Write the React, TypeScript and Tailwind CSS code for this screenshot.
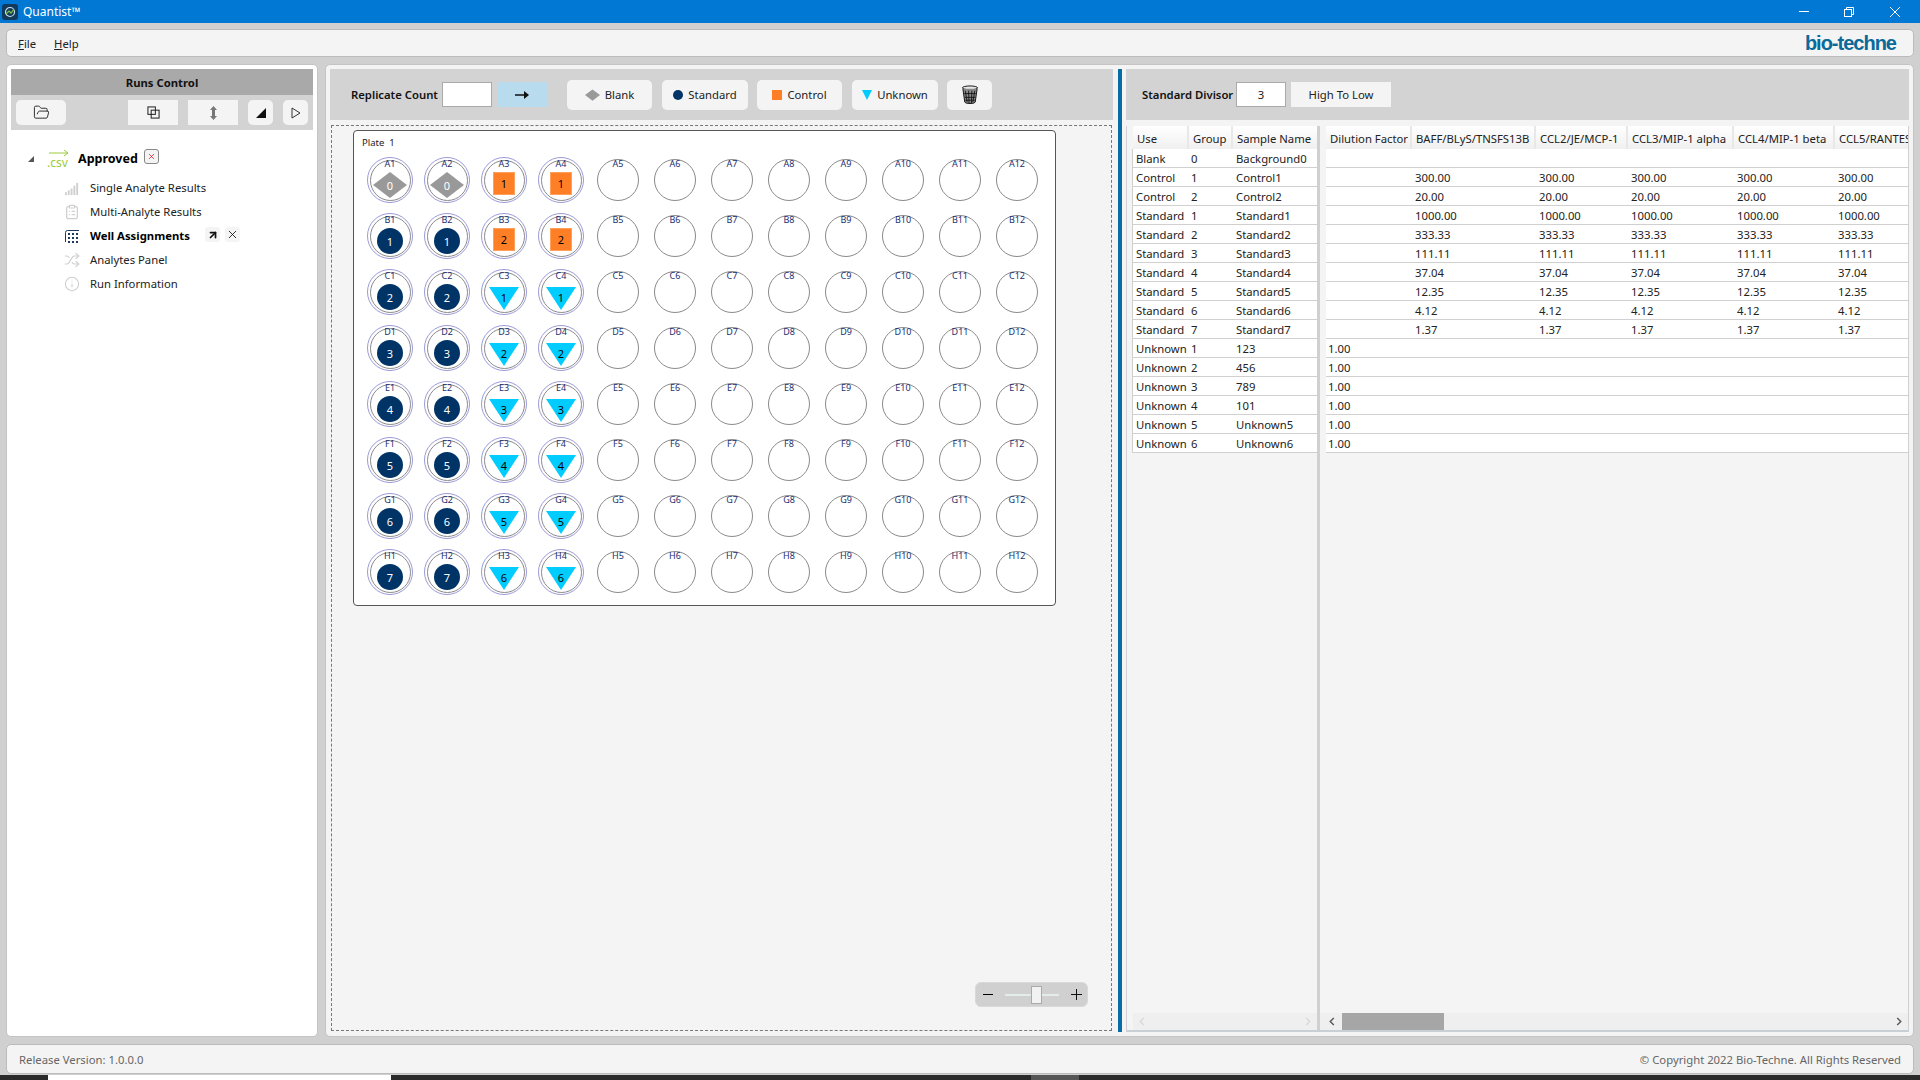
import { ArrowUpRight, ClipboardList, FolderOpen, Info, Shuffle, X } from 'lucide-react';

const ROW_LETTERS = ['A', 'B', 'C', 'D', 'E', 'F', 'G', 'H'];
const COLS = [1, 2, 3, 4, 5, 6, 7, 8, 9, 10, 11, 12];

const ROWS = [
  { use: 'Blank', group: '0', name: 'Background0', vals: '', dil: '' },
  { use: 'Control', group: '1', name: 'Control1', vals: '300.00', dil: '' },
  { use: 'Control', group: '2', name: 'Control2', vals: '20.00', dil: '' },
  { use: 'Standard', group: '1', name: 'Standard1', vals: '1000.00', dil: '' },
  { use: 'Standard', group: '2', name: 'Standard2', vals: '333.33', dil: '' },
  { use: 'Standard', group: '3', name: 'Standard3', vals: '111.11', dil: '' },
  { use: 'Standard', group: '4', name: 'Standard4', vals: '37.04', dil: '' },
  { use: 'Standard', group: '5', name: 'Standard5', vals: '12.35', dil: '' },
  { use: 'Standard', group: '6', name: 'Standard6', vals: '4.12', dil: '' },
  { use: 'Standard', group: '7', name: 'Standard7', vals: '1.37', dil: '' },
  { use: 'Unknown', group: '1', name: '123', vals: '', dil: '1.00' },
  { use: 'Unknown', group: '2', name: '456', vals: '', dil: '1.00' },
  { use: 'Unknown', group: '3', name: '789', vals: '', dil: '1.00' },
  { use: 'Unknown', group: '4', name: '101', vals: '', dil: '1.00' },
  { use: 'Unknown', group: '5', name: 'Unknown5', vals: '', dil: '1.00' },
  { use: 'Unknown', group: '6', name: 'Unknown6', vals: '', dil: '1.00' },
];

const Diamond = ({ className }: { className: string }) => (
  <svg viewBox="0 0 34 26" className={className}>
    <polygon points="17,0 34,13 17,26 0,13" fill="#999999" />
  </svg>
);

const Triangle = ({ className }: { className: string }) => (
  <svg viewBox="0 0 30 23" className={className}>
    <polygon points="0,0 30,0 15,23" fill="#00ccff" />
  </svg>
);

const Well = ({ row, col }: { row: number; col: number }) => {
  const label = `${ROW_LETTERS[row]}${col}`;
  if (col > 4) {
    return (
      <div className="relative flex h-[56px] w-[57px] items-center justify-center">
        <div className="relative h-[42px] w-[42px] rounded-full border border-[#8a8a8a]">
          <span className="absolute left-0 right-0 top-[-2px] text-center text-[9px] leading-[12px] text-[#1a2f70]">{label}</span>
        </div>
      </div>
    );
  }
  let shape = null;
  if (col <= 2 && row === 0) {
    shape = (
      <div className="absolute left-[5px] top-[14px] h-[26px] w-[34px]">
        <Diamond className="h-[26px] w-[34px]" />
        <span className="absolute inset-0 flex items-center justify-center text-[11px] text-white">0</span>
      </div>
    );
  } else if (col <= 2) {
    shape = (
      <div className="absolute left-[9px] top-[14px] flex h-[26px] w-[26px] items-center justify-center rounded-full bg-[#003366] text-[11px] text-white">
        {row}
      </div>
    );
  } else if (row < 2) {
    shape = (
      <div className="absolute left-[11px] top-[14px] flex h-[23px] w-[22px] items-center justify-center border border-[#ffa05c] bg-[#ff7f27] text-[11px] text-black">
        {row + 1}
      </div>
    );
  } else {
    shape = (
      <div className="absolute left-[7px] top-[17px] h-[23px] w-[30px]">
        <Triangle className="h-[23px] w-[30px]" />
        <span className="absolute left-0 right-0 top-[4px] text-center text-[11px] leading-[14px] text-black">{row - 1}</span>
      </div>
    );
  }
  return (
    <div className="relative flex h-[56px] w-[57px] items-center justify-center">
      <div className="relative h-[46px] w-[46px] rounded-full border border-[#9a9ad8]">
        <div className="absolute inset-[1.5px] rounded-full border border-[#8a8a8a]" />
        {shape}
        <span className="absolute left-0 right-0 top-0 text-center text-[9px] leading-[12px] text-[#1a2f70]">{label}</span>
      </div>
    </div>
  );
};

const ToolButton = ({ className, children }: { className: string; children: React.ReactNode }) => (
  <div className={`flex items-center justify-center bg-[#f4f4f4] ${className}`}>{children}</div>
);

const TreeItem = ({ icon, label, bold }: { icon: React.ReactNode; label: string; bold?: boolean }) => (
  <div className="flex h-[24px] items-center pl-[53px]">
    <div className="flex w-[16px] justify-center">{icon}</div>
    <span className={`ml-[10px] w-[115px] whitespace-nowrap ${bold ? 'font-bold text-black' : 'text-[#222]'}`}>{label}</span>
    {bold && (
      <>
        <div className="mb-[3px] flex h-[15px] w-[15px] items-center justify-center rounded-[3px] bg-[#f4f4f4]">
          <ArrowUpRight size={12} strokeWidth={3.5} color="#111" />
        </div>
        <div className="mb-[3px] ml-[5px] flex h-[15px] w-[15px] items-center justify-center rounded-[3px] bg-[#f4f4f4]">
          <X size={13} strokeWidth={1.6} color="#111" />
        </div>
      </>
    )}
  </div>
);

const RunsPanel = () => (
  <div className="w-[312px] shrink-0 rounded-[5px] border border-[#c4c4c4] bg-white p-[4px]">
    <div className="flex h-[26px] items-center justify-center bg-[#a9a9a9] pt-[1px] font-bold text-[#111]">Runs Control</div>
    <div className="flex h-[35px] items-center bg-[#d3d3d3] pl-[5px]">
      <ToolButton className="h-[25px] w-[50px] rounded-[5px]">
        <FolderOpen size={17} strokeWidth={1.3} color="#222" />
      </ToolButton>
      <ToolButton className="ml-[62px] h-[25px] w-[50px]">
        <svg viewBox="0 0 14 14" className="size-[13px]" fill="none" stroke="#222" strokeWidth="1.1">
          <rect x="1" y="1" width="8" height="8" />
          <rect x="4.5" y="4.5" width="8.5" height="8.5" />
        </svg>
      </ToolButton>
      <ToolButton className="ml-[10px] h-[25px] w-[50px]">
        <svg viewBox="0 0 7 14" className="h-[14px] w-[7px]" fill="#777777">
          <polygon points="3.5,0 7,4 5,4 5,10 7,10 3.5,14 0,10 2,10 2,4 0,4" />
        </svg>
      </ToolButton>
      <ToolButton className="ml-[10px] h-[25px] w-[25px] rounded-[5px]">
        <svg viewBox="0 0 10 10" className="size-[10px]"><polygon points="10,0 10,10 0,10" fill="#111" /></svg>
      </ToolButton>
      <ToolButton className="ml-[10px] h-[25px] w-[25px] rounded-[5px]">
        <svg viewBox="0 0 10 12" className="h-[12px] w-[10px]" fill="none" stroke="#333"><polygon points="1,1 9,6 1,11" /></svg>
      </ToolButton>
    </div>
    <div className="pt-[17px]">
      <div className="flex h-[24px] items-center pl-[17px]">
        <svg viewBox="0 0 6 6" className="size-[6px]"><polygon points="6,0 6,6 0,6" fill="#555" /></svg>
        <div className="relative ml-[13px] h-[24px] w-[22px]">
          <svg viewBox="0 0 20 8" className="absolute left-[2px] top-[2px] h-[8px] w-[20px]" fill="none" stroke="#9ccb3b" strokeWidth="1">
            <path d="M0 4H19M15 1l4 3-4 3" />
          </svg>
          <span className="absolute left-0 top-[8px] text-[12px] leading-[16px] text-[#9ccb3b]">.csv</span>
        </div>
        <span className="ml-[9px] w-[66px] text-[12.5px] font-bold text-black">Approved</span>
        <div className="mb-[5px] flex h-[15px] w-[15px] items-center justify-center rounded-[3px] border border-[#888] bg-[#f4f4f4]">
          <X size={9} strokeWidth={2} color="#e81123" />
        </div>
      </div>
      <div className="h-[5px]" />
      <TreeItem
        label="Single Analyte Results"
        icon={
          <svg viewBox="0 0 16 16" className="size-[15px]" fill="#d0d0d0">
            <rect x="0" y="12" width="2" height="3" />
            <rect x="3" y="10" width="2" height="5" />
            <rect x="6" y="8" width="2" height="7" />
            <rect x="9" y="5" width="2" height="10" />
            <rect x="12" y="2" width="2" height="13" />
          </svg>
        }
      />
      <TreeItem label="Multi-Analyte Results" icon={<ClipboardList size={16} color="#cfcfcf" strokeWidth={1.8} />} />
      <TreeItem
        bold
        label="Well Assignments"
        icon={
          <svg viewBox="0 0 14 13" className="h-[13px] w-[14px]" fill="#1f3a5a">
            <path d="M0.5 12V2.5a2 2 0 0 1 2-2H14" fill="none" stroke="#1f3a5a" />
            <rect x="3" y="3" width="2" height="2" />
            <rect x="7" y="3" width="2" height="2" />
            <rect x="11" y="3" width="2" height="2" />
            <rect x="3" y="7" width="2" height="2" />
            <rect x="7" y="7" width="2" height="2" />
            <rect x="11" y="7" width="2" height="2" />
            <rect x="3" y="11" width="2" height="2" />
            <rect x="7" y="11" width="2" height="2" />
            <rect x="11" y="11" width="2" height="2" />
          </svg>
        }
      />
      <TreeItem label="Analytes Panel" icon={<Shuffle size={16} color="#cfcfcf" strokeWidth={1.8} />} />
      <TreeItem label="Run Information" icon={<Info size={16} color="#cfcfcf" strokeWidth={1.6} />} />
    </div>
  </div>
);

const LegendButton = ({ className, icon, label }: { className: string; icon: React.ReactNode; label: string }) => (
  <div className={`flex h-[30px] items-center justify-center gap-[5px] rounded-[5px] bg-[#f4f4f4] ${className}`}>
    {icon}
    <span className="text-[#222]">{label}</span>
  </div>
);

const PlateArea = () => (
  <div className="flex w-[783px] shrink-0 flex-col">
    <div className="flex h-[51px] items-center bg-[#d3d3d3] pl-[21px]">
      <span className="w-[91px] font-semibold text-[#111]">Replicate Count</span>
      <div className="h-[25px] w-[50px] border border-[#aaaaaa] bg-white" />
      <div className="ml-[5px] flex h-[25px] w-[50px] items-center justify-center bg-[#b9dbee]">
        <svg viewBox="0 0 14 8" className="h-[8px] w-[14px]" fill="#111"><path d="M0 3.2h9V0l5 4-5 4V4.8H0z" /></svg>
      </div>
      <LegendButton
        className="ml-[20px] w-[85px]"
        label="Blank"
        icon={<svg viewBox="0 0 16 12" className="h-[12px] w-[15px]"><polygon points="8,0 16,6 8,12 0,6" fill="#999" /></svg>}
      />
      <LegendButton className="ml-[10px] w-[86px]" label="Standard" icon={<span className="size-[10px] rounded-full bg-[#003366]" />} />
      <LegendButton className="ml-[9px] w-[85px]" label="Control" icon={<span className="size-[10px] bg-[#ff7f27]" />} />
      <LegendButton
        className="ml-[10px] w-[86px]"
        label="Unknown"
        icon={<svg viewBox="0 0 10 10" className="size-[10px]"><polygon points="0,0 10,0 5,10" fill="#00ccff" /></svg>}
      />
      <div className="ml-[9px] flex h-[30px] w-[45px] items-center justify-center rounded-[5px] bg-[#f4f4f4]">
        <svg viewBox="0 0 18 20" className="h-[19px] w-[18px]" fill="none" stroke="#111">
          <ellipse cx="9" cy="3" rx="8" ry="2" fill="#e8e8e8" />
          <path d="M1.5 4l2 14q.3 1.5 5.5 1.5t5.5-1.5l2-14" fill="#8a8a8a" />
          <path d="M4 6l2 12M7.5 6l.5 13M11 6l-.5 13M14 6l-2 12M3 9h12M3.5 13h11M4 16h10" stroke="#111" strokeWidth="0.9" />
        </svg>
      </div>
    </div>
    <div className="relative mx-[1px] mb-[1px] mt-[5px] min-h-0 flex-1 border border-dashed border-[#777] pl-[21px] pt-[4px]">
      <div className="h-[476px] w-[703px] rounded-[4px] border border-[#555] bg-white pl-[7.5px]">
        <div className="flex h-[21px] items-center pl-[0.5px] pt-[3px] text-[9.5px] text-[#222]">Plate&nbsp;&nbsp;1</div>
        <div className="grid grid-cols-[repeat(12,57px)] grid-rows-[repeat(8,56px)]">
          {ROW_LETTERS.map((_, row) => COLS.map((col) => <Well key={`${row}-${col}`} row={row} col={col} />))}
        </div>
      </div>
      <div className="absolute bottom-[23px] right-[23px] flex h-[25px] w-[113px] items-center rounded-[6px] border border-[#d9d9d9] bg-[#d0d0d0]">
        <span className="ml-[7px] h-[1px] w-[10px] bg-black" />
        <div className="relative ml-[12px] h-[2px] w-[54px] bg-[#e4ece8]">
          <div className="absolute left-[26px] top-[-8px] h-[18px] w-[11px] border border-[#aaaaaa] bg-[#f2f2f2]" />
        </div>
        <svg viewBox="0 0 11 11" className="ml-[12px] size-[11px]" stroke="#111"><path d="M0 5.5h11M5.5 0v11" /></svg>
      </div>
    </div>
  </div>
);

const HeaderCell = ({ children, last }: { children: React.ReactNode; last?: boolean }) => (
  <div className={`flex items-center overflow-hidden whitespace-nowrap bg-gradient-to-b from-white to-[#f0f0f0] pl-[4px] pt-[3px] text-[#222] ${last ? '' : 'border-r-2 border-[#e8e8e8]'}`}>
    {children}
  </div>
);

const ScrollChevron = ({ dir, color }: { dir: 'l' | 'r'; color: string }) => (
  <svg viewBox="0 0 6 10" className="h-[9px] w-[6px]" fill="none" stroke={color} strokeWidth="1.5">
    <path d={dir === 'l' ? 'M5 1L1 5l4 4' : 'M1 1l4 4-4 4'} />
  </svg>
);

const TablesArea = () => (
  <div className="flex min-w-0 flex-1 flex-col">
    <div className="flex h-[51px] items-center bg-[#d3d3d3] pl-[16px]">
      <span className="w-[94px] font-semibold text-[#111]">Standard Divisor</span>
      <div className="flex h-[25px] w-[50px] items-center justify-center border border-[#aaaaaa] bg-white text-[#222]">3</div>
      <div className="ml-[5px] flex h-[25px] w-[100px] items-center justify-center bg-[#f4f4f4] text-[#222]">High To Low</div>
    </div>
    <div className="mt-[6px] flex min-h-0 flex-1 border-b-2 border-l border-r border-b-[#c8d0d6] border-l-[#d0d0d0] border-r-[#d0d0d0]">
      <div className="flex w-[190px] shrink-0 flex-col">
        <div className="grid h-[23px] grid-cols-[6px_56px_44px_84px]">
          <div className="bg-[#f4f4f4]" />
          <HeaderCell>Use</HeaderCell>
          <HeaderCell>Group</HeaderCell>
          <HeaderCell last>Sample Name</HeaderCell>
        </div>
        {ROWS.map((r) => (
          <div key={`${r.use}${r.group}`} className="grid h-[19px] grid-cols-[6px_56px_44px_84px] text-[#222]">
            <div className="border-r border-[#d0d0d0] bg-[#f4f4f4]" />
            <div className="flex items-center border-b border-[#d0d0d0] bg-white pl-[3px] pt-[1px]">{r.use}</div>
            <div className="flex items-center border-b border-[#d0d0d0] bg-white pl-[2px] pt-[1px]">{r.group}</div>
            <div className="flex items-center border-b border-[#d0d0d0] bg-white pl-[3px] pt-[1px]">{r.name}</div>
          </div>
        ))}
        <div className="flex-1" />
        <div className="ml-[6px] flex h-[17px] items-center justify-between bg-[#efefef] px-[6px]">
          <ScrollChevron dir="l" color="#d8d8d8" />
          <ScrollChevron dir="r" color="#d8d8d8" />
        </div>
      </div>
      <div className="w-[3px] shrink-0 bg-[#d0d0d0]" />
      <div className="flex min-w-0 flex-1 flex-col overflow-hidden">
        <div className="grid h-[23px] grid-cols-[6px_86px_124px_92px_106px_101px_74px]">
          <div className="bg-[#f4f4f4]" />
          <HeaderCell>Dilution Factor</HeaderCell>
          <HeaderCell>BAFF/BLyS/TNSFS13B</HeaderCell>
          <HeaderCell>CCL2/JE/MCP-1</HeaderCell>
          <HeaderCell>CCL3/MIP-1 alpha</HeaderCell>
          <HeaderCell>CCL4/MIP-1 beta</HeaderCell>
          <HeaderCell last>CCL5/RANTES</HeaderCell>
        </div>
        {ROWS.map((r) => (
          <div key={`${r.use}${r.group}v`} className="grid h-[19px] grid-cols-[6px_86px_124px_92px_106px_101px_74px] text-[#222]">
            <div className="bg-[#f4f4f4]" />
            <div className="flex items-center border-b border-[#d0d0d0] bg-white pl-[2px] pt-[1px]">{r.dil}</div>
            {[0, 1, 2, 3, 4].map((i) => (
              <div key={i} className="flex items-center border-b border-[#d0d0d0] bg-white pl-[3px] pt-[1px]">{r.vals}</div>
            ))}
          </div>
        ))}
        <div className="flex-1" />
        <div className="flex h-[17px] items-center bg-[#efefef]">
          <div className="flex w-[17px] shrink-0 justify-center pl-[6px]"><ScrollChevron dir="l" color="#555" /></div>
          <div className="ml-[5px] h-[17px] w-[102px] bg-[#a6a6a6]" />
          <div className="ml-auto mr-[6px]"><ScrollChevron dir="r" color="#555" /></div>
        </div>
      </div>
    </div>
  </div>
);

export default function App() {
  return (
    <div className="flex h-screen w-screen flex-col overflow-hidden bg-[#d0d0d0] font-['Noto_Sans',sans-serif] text-[11.3px] leading-none">
      <div className="flex h-[23px] shrink-0 items-center bg-[#0078d4] text-white">
        <div className="ml-[2px] flex size-[16px] items-center justify-center rounded-[3px] bg-[#123a5c]">
          <svg viewBox="0 0 12 12" className="size-[12px]" fill="none" stroke="#c7dfe8" strokeWidth="1.2">
            <circle cx="6" cy="6" r="4.5" />
            <path d="M2 8l3-3 2 2 3-4" stroke="#7fc241" />
          </svg>
        </div>
        <span className="ml-[5px] text-[12px]">Quantist™</span>
        <div className="ml-auto flex items-center">
          <span className="h-[1px] w-[10px] bg-white" />
          <svg viewBox="0 0 10 10" className="ml-[35px] size-[10px]" fill="none" stroke="white">
            <rect x="0.5" y="2.5" width="7" height="7" />
            <path d="M2.5 2.5v-2h7v7h-2" />
          </svg>
          <svg viewBox="0 0 10 10" className="ml-[36px] mr-[20px] size-[10px]" stroke="white"><path d="M0 0l10 10M10 0L0 10" /></svg>
        </div>
      </div>

      <div className="flex min-h-0 flex-1 flex-col gap-[7px] px-[6px] pt-[6px]">
        <div className="flex h-[28px] shrink-0 items-center rounded-[5px] border border-[#bbbbbb] bg-[#f4f4f4] pl-[11px] pr-[17px] text-[#222]">
          <span className="pt-[2px]"><u>F</u>ile</span>
          <span className="ml-[18px] pt-[2px]"><u>H</u>elp</span>
          <span className="ml-auto font-['Liberation_Sans',sans-serif] text-[20px] font-bold tracking-[-1px] text-[#0a6a9a]">bio-techne</span>
        </div>

        <div className="flex min-h-0 flex-1 gap-[7px]">
          <RunsPanel />
          <div className="flex min-w-0 flex-1 rounded-[5px] border border-[#c4c4c4] bg-[#f4f4f4] p-[4px]">
            <PlateArea />
            <div className="ml-[5px] w-[4px] shrink-0 bg-[#0a6ca5]" />
            <div className="w-[4px] shrink-0" />
            <TablesArea />
          </div>
        </div>

        <div className="flex h-[30px] shrink-0 items-center justify-between rounded-[5px] border border-[#bbbbbb] bg-[#f4f4f4] pl-[12px] pr-[12px] pt-[1px] text-[#666]">
          <span>Release Version: 1.0.0.0</span>
          <span>© Copyright 2022 Bio-Techne. All Rights Reserved</span>
        </div>
      </div>

      <div className="mt-[1px] flex h-[5px] shrink-0 bg-[#2a2a2a]">
        <div className="ml-[48px] w-[343px] bg-white" />
        <div className="ml-[640px] w-[48px] bg-[#555555]" />
      </div>
    </div>
  );
}
